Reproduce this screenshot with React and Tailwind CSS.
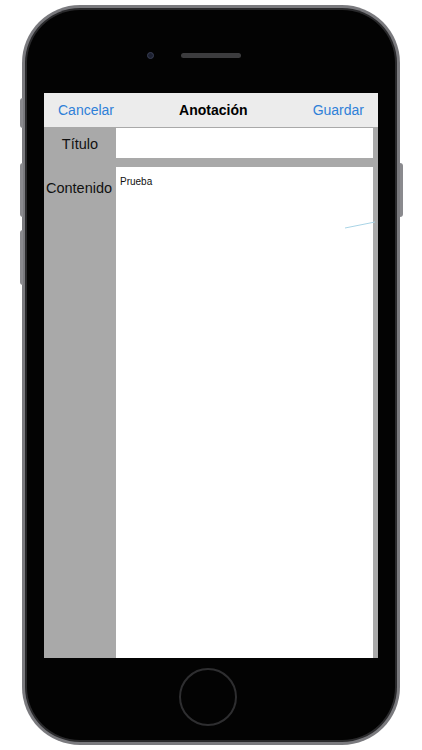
export default function App() {
	return (
		<div className="w-[422px] h-[750px] bg-white pt-[5px] pl-[22px]" style={{ fontFamily: '"Liberation Sans", Arial, sans-serif' }}>
			<div className="relative w-[378px] h-[740px] rounded-[58px] bg-[#7a7a7e] p-[3px]">
				{/* side buttons */}
				<div className="absolute -left-[2px] top-[93px] w-[3px] h-[30px] rounded-l-sm bg-[#8a8a8e]"></div>
				<div className="absolute -left-[2px] top-[158px] w-[3px] h-[54px] rounded-l-sm bg-[#8a8a8e]"></div>
				<div className="absolute -left-[2px] top-[225px] w-[3px] h-[55px] rounded-l-sm bg-[#8a8a8e]"></div>
				<div className="absolute -right-[3px] top-[158px] w-[3px] h-[54px] rounded-r-sm bg-[#8a8a8e]"></div>
				<div className="w-full h-full rounded-[55px] bg-[#2a2a2c] p-[2px]">
					<div className="w-full h-full rounded-[53px] bg-[#030303] flex flex-col">
						{/* top: camera + speaker */}
						<div className="h-[83px] flex items-start pt-[42px] pl-[120px]">
							<div className="w-[7px] h-[7px] rounded-full bg-[#1c2030] border border-[#3a3f55]"></div>
							<div className="ml-[27px] mt-[1px] w-[60px] h-[5px] rounded-full bg-[#3c3c3e]"></div>
						</div>
						{/* screen */}
						<div className="mx-[17px] h-[565px] flex flex-col bg-[#a9a9a9]">
							<div className="h-[34px] bg-[#ececec] flex items-center justify-between px-[14px] text-[14px]">
								<span className="text-[#2f80d8]">Cancelar</span>
								<span className="font-bold text-black">Anotación</span>
								<span className="text-[#2f80d8]">Guardar</span>
							</div>
							<div className="flex flex-1">
								<div className="w-[72px] flex flex-col items-center text-[14.5px] text-[#111]">
									<div className="h-[32px] flex items-center pt-[3px]">Título</div>
									<div className="mt-[19px] pr-[2px]">Contenido</div>
								</div>
								<div className="flex-1 flex flex-col pr-[5px] pt-[1px]">
									<div className="h-[30px] bg-white"></div>
									<div className="relative mt-[9px] flex-1 bg-white px-[4px] pt-[7px] text-[10px] text-[#111]">
										Prueba
										<svg className="absolute left-[229px] top-[54px]" width="30" height="8" viewBox="0 0 30 8">
											<line x1="0" y1="7" x2="30" y2="1" stroke="#a9d4e6" strokeWidth="1" />
										</svg>
									</div>
								</div>
							</div>
						</div>
						{/* bottom: home button */}
						<div className="flex-1 flex justify-center pt-[10px] pr-[6px]">
							<div className="w-[58px] h-[58px] rounded-full border-2 border-[#2e2e30]"></div>
						</div>
					</div>
				</div>
			</div>
		</div>
	);
}
